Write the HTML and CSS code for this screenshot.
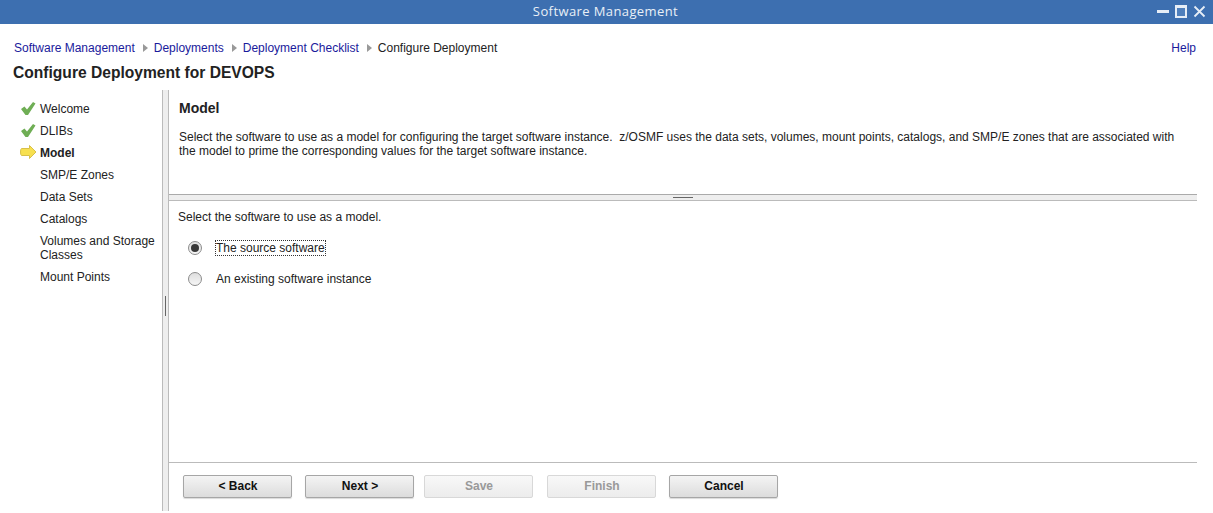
FILE: index.html
```html
<!DOCTYPE html>
<html lang="en">
<head>
    <meta charset="UTF-8">
    <meta name="viewport" content="width=device-width, initial-scale=1.0">
    <title>Software Management</title>
    <link rel="stylesheet" href="styles.css">
</head>
<body>
    <header class="titlebar">
        <span class="titlebar-text">Software Management</span>
        <div class="window-controls">
            <svg width="13" height="13" viewBox="0 0 13 13"><rect x="0" y="5" width="12" height="3" fill="#e6edf6"/></svg>
            <svg width="13" height="13" viewBox="0 0 13 13"><path d="M1 1.500h10v10.500h-10z" fill="#4f7fbc" stroke="#e6edf6" stroke-width="2"/><rect x="0" y="0" width="12" height="3" fill="#e6edf6"/></svg>
            <svg width="13" height="13" viewBox="0 0 13 13"><path d="M1.500 1.500l10 10M11.500 1.500l-10 10" fill="none" stroke="#e6edf6" stroke-width="1.800"/></svg>
        </div>
    </header>

    <nav class="breadcrumbs">
        <a href="#">Software Management</a>
        <span class="crumb-sep"></span>
        <a href="#">Deployments</a>
        <span class="crumb-sep"></span>
        <a href="#">Deployment Checklist</a>
        <span class="crumb-sep"></span>
        <span>Configure Deployment</span>
        <a href="#" class="help">Help</a>
    </nav>

    <h1 class="page-title">Configure Deployment for DEVOPS</h1>

    <div class="wizard">
        <ul class="steps">
            <li class="step">
                <svg class="step-icon check" width="16" height="14" viewBox="0 0 16 14"><path d="M1 8l3.500-2.500 2.500 3 6-7.500 2.500 1.500-7.500 11.500h-2.500z" fill="#6fae55"/></svg>
                Welcome
            </li>
            <li class="step">
                <svg class="step-icon check" width="16" height="14" viewBox="0 0 16 14"><path d="M1 8l3.500-2.500 2.500 3 6-7.500 2.500 1.500-7.500 11.500h-2.500z" fill="#6fae55"/></svg>
                DLIBs
            </li>
            <li class="step current">
                <svg class="step-icon" width="17" height="14" viewBox="0 0 17 14"><path d="M1.500 3.500h8v-3l6.500 6.500-6.500 6.500v-3h-8q-1-.5-1-3.500t1-3.500z" fill="#f7e050" stroke="#d8c04a"/></svg>
                Model
            </li>
            <li class="step">SMP/E Zones</li>
            <li class="step">Data Sets</li>
            <li class="step">Catalogs</li>
            <li class="step tall">Volumes and Storage Classes</li>
            <li class="step">Mount Points</li>
        </ul>

        <div class="v-splitter"><span class="v-grip"></span></div>

        <main class="panel">
            <section class="panel-intro">
                <h2>Model</h2>
                <p>Select the software to use as a model for configuring the target software instance.&nbsp; z/OSMF uses the data sets, volumes, mount points, catalogs, and SMP/E zones that are associated with the model to prime the corresponding values for the target software instance.</p>
            </section>

            <div class="h-splitter"><span class="h-grip"></span></div>

            <section class="panel-body">
                <p class="prompt">Select the software to use as a model.</p>
                <label class="choice first">
                    <span class="radio checked"></span>
                    <span class="choice-label focused">The source software</span>
                </label>
                <label class="choice">
                    <span class="radio"></span>
                    <span class="choice-label">An existing software instance</span>
                </label>
            </section>

            <footer class="panel-footer">
                <button type="button" class="btn">&lt; Back</button>
                <button type="button" class="btn">Next &gt;</button>
                <button type="button" class="btn btn-save" disabled>Save</button>
                <button type="button" class="btn btn-finish" disabled>Finish</button>
                <button type="button" class="btn">Cancel</button>
            </footer>
        </main>
    </div>
</body>
</html>
```

FILE: styles.css
```css
html, body {
    height: 100%;
}

body {
    font-family: "Liberation Sans", Arial, sans-serif;
    font-size: 12px;
    color: #222;
    background-color: white;
    margin: 0;
    display: flex;
    flex-direction: column;
    overflow: hidden;
}

.titlebar {
    height: 24px;
    flex: none;
    background-color: #3d6fb0;
    display: flex;
    align-items: center;
    justify-content: center;
    position: relative;
}

.titlebar-text {
    font-family: "Open Sans", sans-serif;
    font-size: 13px;
    line-height: 22px;
    margin-bottom: 2px;
    margin-right: 2px;
    letter-spacing: 0.4px;
    color: #e9eff7;
}

.window-controls {
    position: absolute;
    right: 7px;
    top: 5px;
    display: flex;
    gap: 5px;
}

.breadcrumbs {
    display: flex;
    align-items: center;
    height: 14px;
    margin: 17px 17px 0 14px;
    flex: none;
}

.breadcrumbs a {
    color: #1a1a9c;
    text-decoration: none;
}

.crumb-sep {
    width: 0;
    height: 0;
    margin: 0 6px 0 8px;
    border-left: 5px solid #999;
    border-top: 4px solid transparent;
    border-bottom: 4px solid transparent;
}

.breadcrumbs .help {
    margin-left: auto;
}

.page-title {
    font-size: 15.600px;
    font-weight: bold;
    line-height: 18px;
    margin: 9px 0 0 13px;
    flex: none;
}

.wizard {
    display: flex;
    flex: 1;
    min-height: 0;
    margin-top: 8px;
    margin-bottom: 2px;
}

.steps {
    list-style: none;
    margin: 0;
    padding: 8px 0 0 0;
    width: 162px;
    flex: none;
}

.step {
    position: relative;
    padding: 4px 0 4px 40px;
    line-height: 14px;
}

.step.current {
    font-weight: bold;
}

.step-icon {
    position: absolute;
    left: 20px;
    top: 3px;
}

.v-splitter {
    width: 5px;
    flex: none;
    background-color: #eee;
    border-left: 1px solid #bbb;
    border-right: 1px solid #bbb;
    display: flex;
    align-items: center;
    justify-content: center;
    margin-right: -1px;
}

.v-grip {
    width: 1px;
    height: 20px;
    margin-top: 10px;
    background-color: #666;
}

.panel {
    flex: 1;
    min-width: 0;
    margin-left: 1px;
    margin-right: 16px;
    display: flex;
    flex-direction: column;
}

.panel-intro {
    height: 104px;
    flex: none;
    padding: 0 10px;
}

.panel-intro h2 {
    font-size: 14px;
    line-height: 16px;
    margin: 10px 0 0 0;
}

.panel-intro p {
    line-height: 14px;
    margin: 14px 0 0 0;
}

.h-splitter {
    height: 5px;
    flex: none;
    background-color: #eee;
    border-top: 1px solid #aaa;
    border-bottom: 1px solid #bbb;
    display: flex;
    align-items: center;
    justify-content: center;
}

.h-grip {
    width: 20px;
    height: 1px;
    background-color: #666;
}

.panel-body {
    flex: 1;
    padding-left: 9px;
}

.prompt {
    line-height: 14px;
    margin: 9px 0 0 0;
}

.choice {
    display: flex;
    align-items: center;
    height: 17px;
    margin: 14px 0 0 10px;
}

.choice.first {
    margin-top: 15px;
}

.radio {
    width: 12px;
    height: 12px;
    border-radius: 50%;
    border: 1px solid #8c8c8c;
    background: linear-gradient(#dedede, #f6f6f6);
    margin-right: 13px;
    position: relative;
    flex: none;
}

.radio.checked::after {
    content: "";
    position: absolute;
    left: 2px;
    top: 2px;
    width: 8px;
    height: 8px;
    border-radius: 50%;
    background-color: #383838;
}

.choice-label {
    line-height: 14px;
    border: 1px dotted transparent;
}

.choice-label.focused {
    border-color: #333;
}

.panel-footer {
    box-sizing: border-box;
    height: 49px;
    flex: none;
    border-top: 1px solid #bbb;
    padding: 12px 0 0 14px;
    display: flex;
    gap: 13px;
    align-items: flex-start;
}

.btn {
    width: 109px;
    height: 23px;
    padding: 0 0 2px 1px;
    font-family: inherit;
    font-size: 12px;
    font-weight: bold;
    color: #111;
    background: linear-gradient(#f4f4f4, #dcdcdc);
    border: 1px solid #a6a6a6;
    border-radius: 2px;
    box-shadow: 0 1px 1px rgba(0,0,0,0.15);
}

.btn:disabled {
    color: #999;
    background: linear-gradient(#f8f8f8, #ececec);
    border-color: #d8d8d8;
    box-shadow: none;
}

.btn-save {
    margin-left: -3px;
}

.btn-finish {
    margin-left: 1px;
}
```
